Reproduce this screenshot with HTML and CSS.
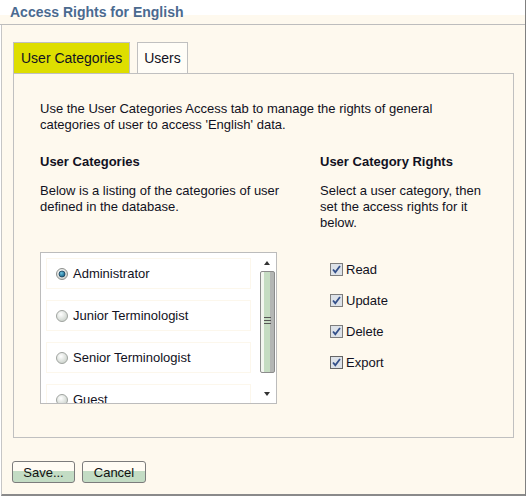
FILE: index.html
```html
<!DOCTYPE html>
<html>
<head>
<meta charset="utf-8">
<link rel="stylesheet" href="styles.css">
</head>
<body>
<div class="window">
  <div class="titlebar">Access Rights for English</div>
  <div class="content">
    <div class="tabs">
      <div class="tab tab-active">User Categories</div>
      <div class="tab">Users</div>
    </div>
    <div class="panel">
      <p class="intro">Use the User Categories Access tab to manage the rights of general<br>categories of user to access 'English' data.</p>
      <div class="columns">
        <div class="col col-left">
          <h3 class="heading">User Categories</h3>
          <p class="para">Below is a listing of the categories of user<br>defined in the database.</p>
          <div class="listbox">
            <div class="items">
              <div class="item"><span class="radio"><svg width="12" height="12" viewBox="0 0 12 12"><defs><radialGradient id="rg1" cx="0.4" cy="0.35" r="0.7"><stop offset="0" stop-color="#ffffff"/><stop offset="1" stop-color="#c9cdc9"/></radialGradient><radialGradient id="dot" cx="0.4" cy="0.35" r="0.7"><stop offset="0" stop-color="#6fc3e0"/><stop offset="1" stop-color="#0b5c82"/></radialGradient></defs><circle cx="6" cy="6" r="5.5" fill="url(#rg1)" stroke="#8e918e"/><circle cx="6" cy="6" r="3" fill="url(#dot)" stroke="#1b3e58" stroke-width="0.8"/></svg></span>Administrator</div>
              <div class="item"><span class="radio"><svg width="12" height="12" viewBox="0 0 12 12"><defs><radialGradient id="rg2" cx="0.4" cy="0.35" r="0.7"><stop offset="0" stop-color="#ffffff"/><stop offset="1" stop-color="#c9d0c9"/></radialGradient></defs><circle cx="6" cy="6" r="5.5" fill="url(#rg2)" stroke="#a0a4a0"/></svg></span>Junior Terminologist</div>
              <div class="item"><span class="radio"><svg width="12" height="12" viewBox="0 0 12 12"><circle cx="6" cy="6" r="5.5" fill="url(#rg2)" stroke="#a0a4a0"/></svg></span>Senior Terminologist</div>
              <div class="item"><span class="radio"><svg width="12" height="12" viewBox="0 0 12 12"><circle cx="6" cy="6" r="5.5" fill="url(#rg2)" stroke="#a0a4a0"/></svg></span>Guest</div>
            </div>
            <div class="scrollbar">
              <span class="arrow arrow-up"></span>
              <div class="thumb"><span class="grip"></span></div>
              <span class="arrow arrow-down"></span>
            </div>
          </div>
        </div>
        <div class="col col-right">
          <h3 class="heading">User Category Rights</h3>
          <p class="para">Select a user category, then<br>set the access rights for it<br>below.</p>
          <div class="checks">
            <div class="check"><span class="box"><svg width="13" height="13" viewBox="0 0 13 13"><rect x="0.5" y="0.5" width="12" height="12" fill="#dde2e8" stroke="#7d7d7d"/><path d="M3 6.5 L5.3 9.2 L10 3" fill="none" stroke="#34508a" stroke-width="1.8"/></svg></span>Read</div>
            <div class="check"><span class="box"><svg width="13" height="13" viewBox="0 0 13 13"><rect x="0.5" y="0.5" width="12" height="12" fill="#dde2e8" stroke="#7d7d7d"/><path d="M3 6.5 L5.3 9.2 L10 3" fill="none" stroke="#34508a" stroke-width="1.8"/></svg></span>Update</div>
            <div class="check"><span class="box"><svg width="13" height="13" viewBox="0 0 13 13"><rect x="0.5" y="0.5" width="12" height="12" fill="#dde2e8" stroke="#7d7d7d"/><path d="M3 6.5 L5.3 9.2 L10 3" fill="none" stroke="#34508a" stroke-width="1.8"/></svg></span>Delete</div>
            <div class="check"><span class="box"><svg width="13" height="13" viewBox="0 0 13 13"><rect x="0.5" y="0.5" width="12" height="12" fill="#dde2e8" stroke="#7d7d7d"/><path d="M3 6.5 L5.3 9.2 L10 3" fill="none" stroke="#34508a" stroke-width="1.8"/><rect x="0.5" y="0.5" width="12" height="12" fill="none" stroke="#333" stroke-dasharray="1 1" stroke-width="0.6"/></svg></span>Export</div>
          </div>
        </div>
      </div>
    </div>
    <div class="buttons">
      <button class="btn btn-save">Save...</button>
      <button class="btn btn-cancel">Cancel</button>
    </div>
  </div>
</div>
</body>
</html>
```

FILE: styles.css
```css
html, body {
  margin: 0;
  padding: 0;
  background: #ffffff;
}
body {
  font-family: "Liberation Sans", Arial, sans-serif;
  font-size: 13px;
  color: #111122;
}
.window {
  width: 526px;
  height: 496px;
  box-sizing: border-box;
  border-right: 1px solid #808080;
  display: flex;
  flex-direction: column;
}
.titlebar {
  height: 24px;
  line-height: 24px;
  border-bottom: 1px solid #bdbdbd;
  background: linear-gradient(#ffffff 0 15px, #fef9ee 15px);
  color: #4b6a8f;
  font-weight: bold;
  font-size: 14px;
  padding-left: 10px;
  flex: none;
}
.content {
  flex: 1;
  margin-left: 1px;
  border-left: 1px solid #c6c6c6;
  border-bottom: 2px solid #8a8a8a;
  background: #fef9ee;
  padding: 17px 11px 0 11px;
  box-sizing: border-box;
}
.tabs {
  display: flex;
  gap: 7px;
  height: 31px;
}
.tab {
  box-sizing: border-box;
  height: 31px;
  border: 1px solid #c0c0c0;
  border-bottom: none;
  font-size: 14px;
  line-height: 30px;
  padding: 0 6px;
  white-space: nowrap;
  background: #fffdf7;
}
.tab-active {
  background: #dede00;
  padding: 0 7px;
}
.panel {
  box-sizing: border-box;
  height: 365px;
  border: 1px solid #c0c0c0;
  padding: 27px 0 0 26px;
}
.intro, .para {
  margin: 0;
  line-height: 16px;
}
.columns {
  display: flex;
  margin-top: 21px;
}
.col-left {
  width: 280px;
}
.col-right {
  width: 190px;
}
.heading {
  margin: 0;
  font-size: 13px;
  line-height: 16px;
  font-weight: bold;
}
.heading + .para {
  margin-top: 13px;
}
.listbox {
  margin-top: 37px;
  width: 237px;
  height: 152px;
  box-sizing: border-box;
  border: 1px solid #bcbcbc;
  background: #ffffff;
  display: flex;
  overflow: hidden;
}
.items {
  flex: 1;
  padding: 5px 0 0 5px;
  display: flex;
  flex-direction: column;
  gap: 11px;
}
.item {
  flex: none;
  width: 205px;
  height: 31px;
  box-sizing: border-box;
  border: 1px solid #fcf7ec;
  display: flex;
  align-items: center;
  padding-left: 9px;
}
.radio {
  width: 12px;
  height: 12px;
  margin-right: 5px;
  display: inline-flex;
}
.scrollbar {
  width: 17px;
  flex: none;
  position: relative;
  background: #ffffff;
}
.arrow {
  position: absolute;
  left: 5px;
  width: 0;
  height: 0;
  border-left: 3.5px solid transparent;
  border-right: 3.5px solid transparent;
}
.arrow-up {
  top: 8px;
  border-bottom: 4px solid #333;
}
.arrow-down {
  bottom: 7px;
  border-top: 4px solid #333;
}
.thumb {
  position: absolute;
  top: 18px;
  left: 1px;
  width: 15px;
  height: 102px;
  box-sizing: border-box;
  border: 1px solid #8c8c8c;
  border-radius: 2px;
  background: linear-gradient(to right, #f3f6f0 0 3px, #c5dcc2 3px 9px, #b4b6b4 9px);
}
.grip {
  position: absolute;
  top: 45px;
  left: 3px;
  width: 7px;
  height: 7px;
  background: repeating-linear-gradient(#555 0 1px, transparent 1px 3px);
}
.checks {
  margin-top: 23px;
  padding-left: 10px;
  display: flex;
  flex-direction: column;
}
.check {
  height: 31px;
  display: flex;
  align-items: center;
}
.box {
  width: 13px;
  height: 13px;
  margin-right: 3px;
  display: inline-flex;
}
.buttons {
  display: flex;
  gap: 7px;
  margin-top: 23px;
  margin-left: -1px;
}
.btn {
  font-family: "Liberation Sans", Arial, sans-serif;
  font-size: 13px;
  color: #111;
  height: 22px;
  box-sizing: border-box;
  border: 1px solid #7c7c7c;
  border-radius: 3px;
  background: linear-gradient(#fffcf4 0 9px, #c3dcc4 9px);
  padding: 0;
  line-height: 19px;
}
.btn-save {
  width: 63px;
}
.btn-cancel {
  width: 64px;
}
```
